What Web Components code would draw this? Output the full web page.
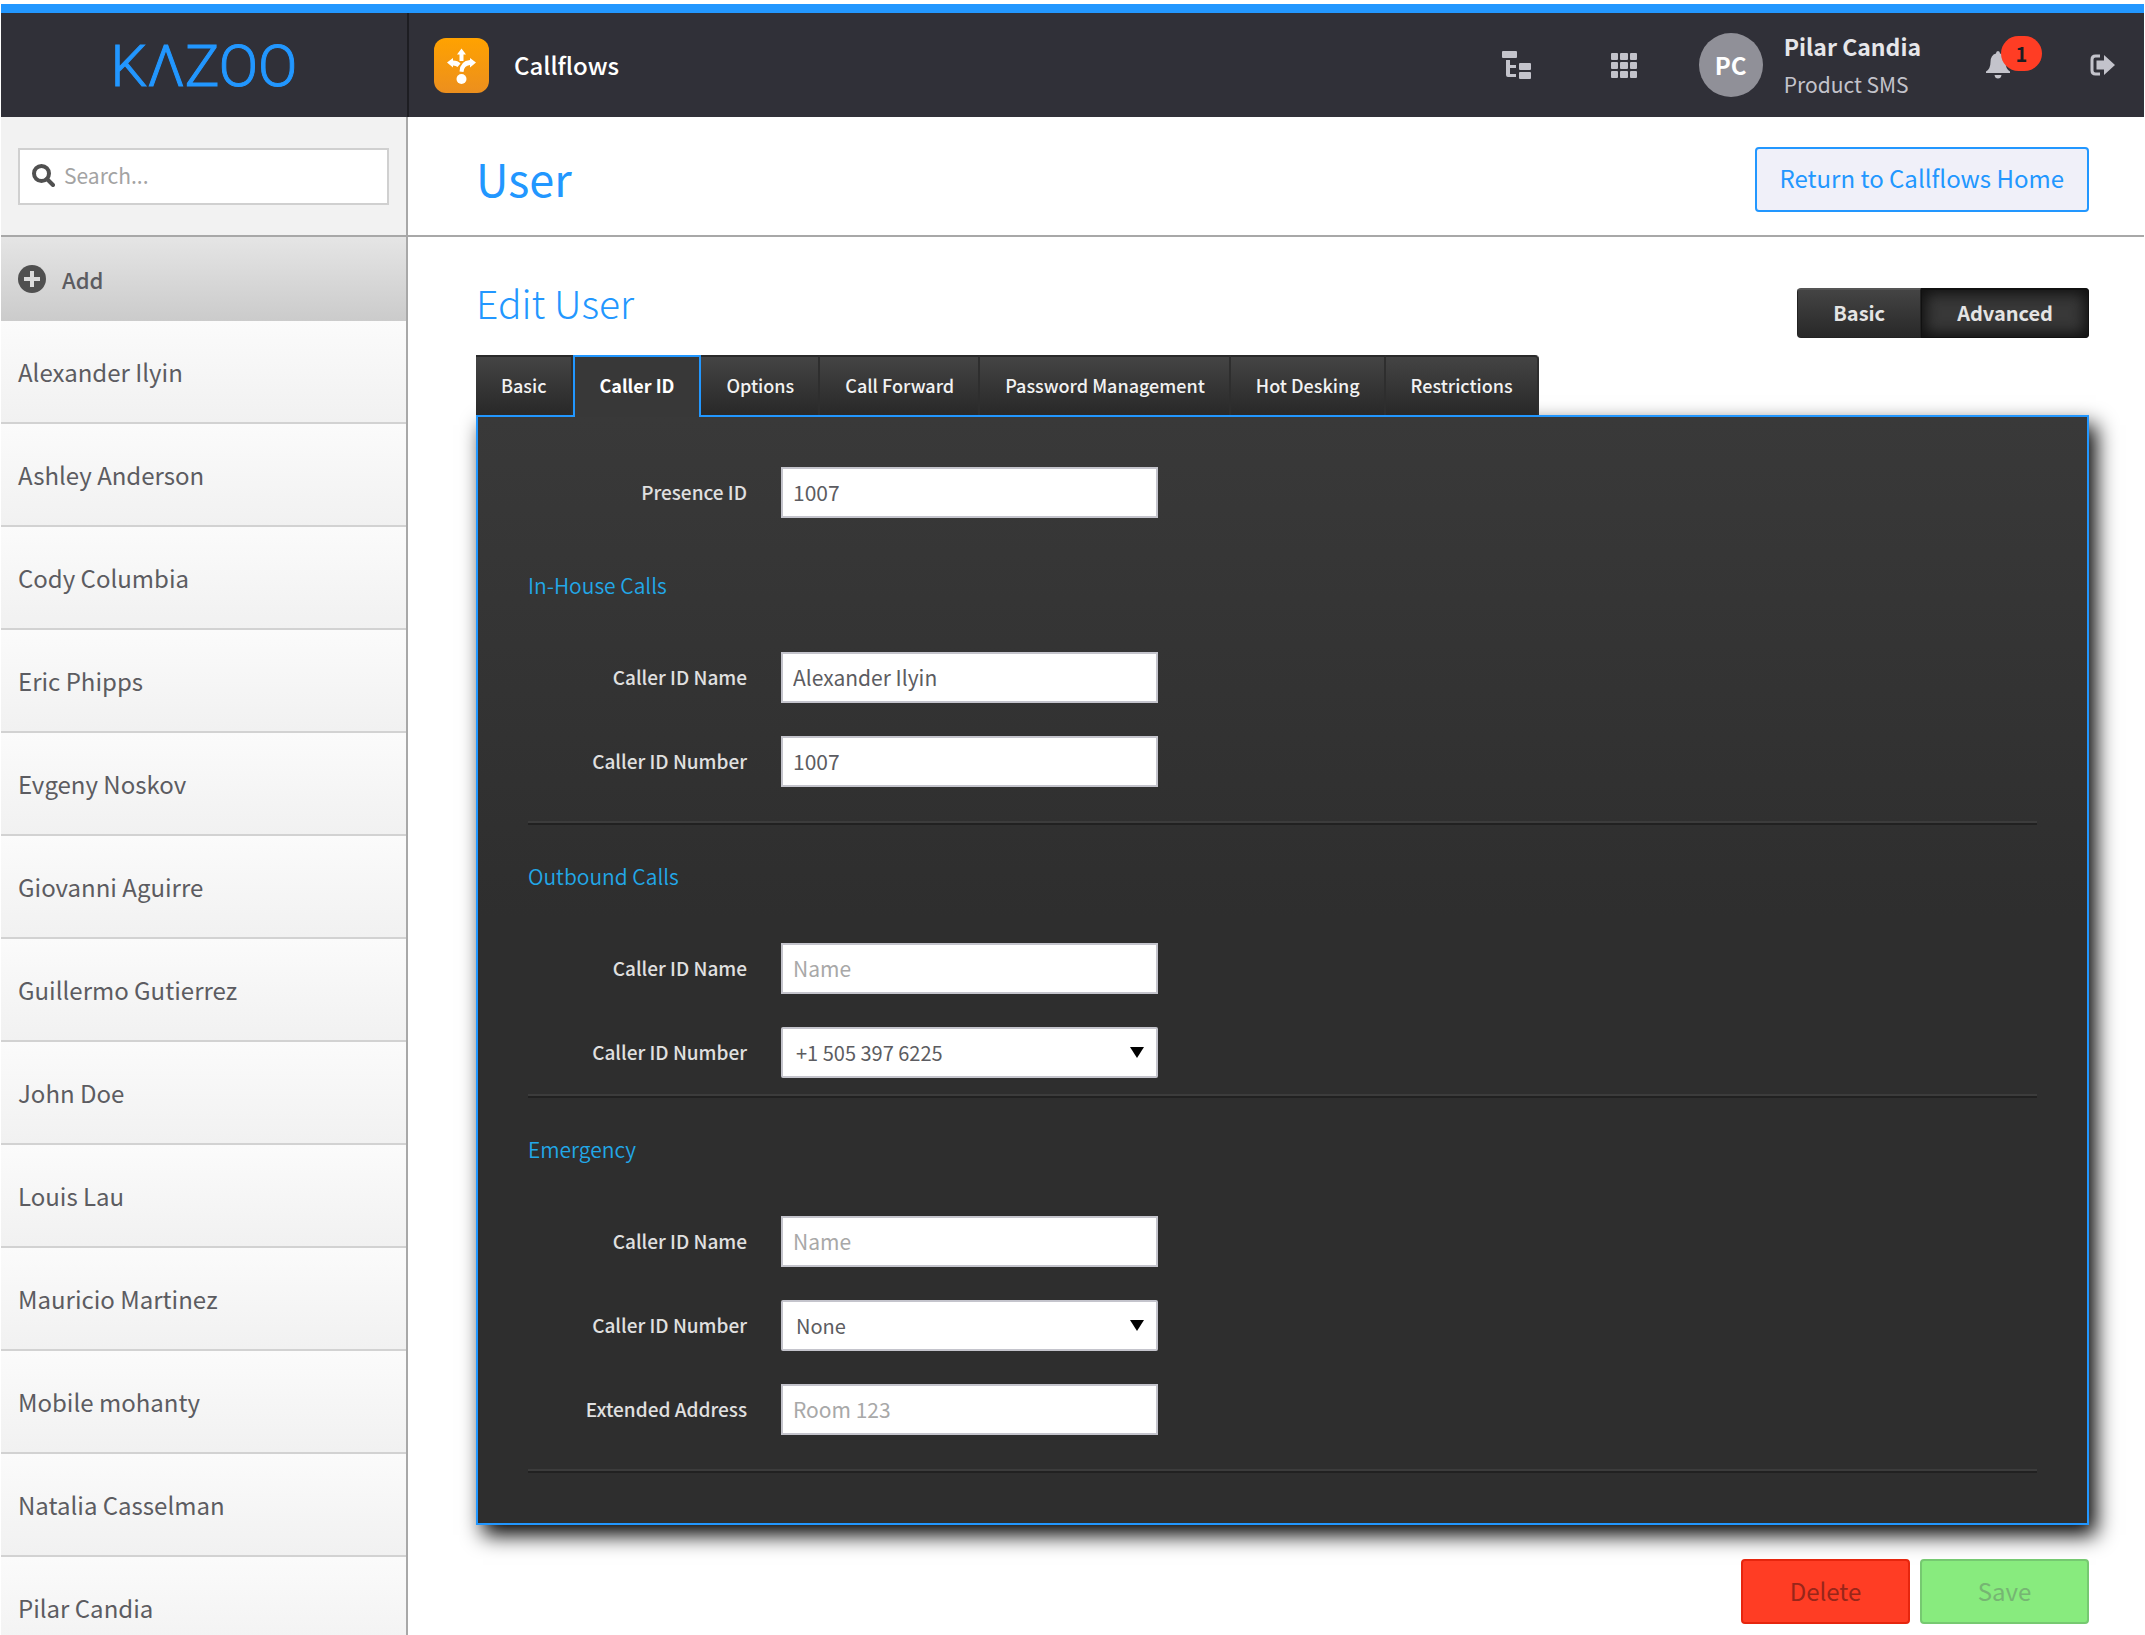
<!DOCTYPE html>
<html lang="en">
<head>
<meta charset="utf-8">
<title>Callflows - User</title>
<style>
  :root {
    --blue: #2297ff;
    --dark: #303038;
    --text: #5c5c61;
    --line: #a8a8a8;
  }
  body {
    margin: 0;
    font-family: "Noto Sans CJK SC", "Open Sans", sans-serif;
    font-size: 24px;
    line-height: 32px;
    color: var(--text);
    background: #fff;
  }
</style>
</head>
<body>
<kz-app>
  <kz-topbar slot="top" app="Callflows" user="Pilar Candia" account="Product SMS" initials="PC" alerts="1"></kz-topbar>

  <kz-sidebar slot="side">
    <kz-entry>Alexander Ilyin</kz-entry>
    <kz-entry>Ashley Anderson</kz-entry>
    <kz-entry>Cody Columbia</kz-entry>
    <kz-entry>Eric Phipps</kz-entry>
    <kz-entry>Evgeny Noskov</kz-entry>
    <kz-entry>Giovanni Aguirre</kz-entry>
    <kz-entry>Guillermo Gutierrez</kz-entry>
    <kz-entry>John Doe</kz-entry>
    <kz-entry>Louis Lau</kz-entry>
    <kz-entry>Mauricio Martinez</kz-entry>
    <kz-entry>Mobile mohanty</kz-entry>
    <kz-entry>Natalia Casselman</kz-entry>
    <kz-entry>Pilar Candia</kz-entry>
  </kz-sidebar>

  <kz-page-title heading="User">
    <kz-button kind="outline">Return to Callflows Home</kz-button>
  </kz-page-title>

  <kz-editor heading="Edit User">
    <kz-switch slot="mode" options="Basic,Advanced" active="Advanced"></kz-switch>
    <kz-tabs slot="tabs" tabs="Basic,Caller ID,Options,Call Forward,Password Management,Hot Desking,Restrictions" active="Caller ID"></kz-tabs>

    <kz-field label="Presence ID" value="1007"></kz-field>
    <kz-section heading="In-House Calls">
      <kz-field label="Caller ID Name" value="Alexander Ilyin"></kz-field>
      <kz-field label="Caller ID Number" value="1007"></kz-field>
    </kz-section>
    <kz-section heading="Outbound Calls" tight>
      <kz-field label="Caller ID Name" placeholder="Name"></kz-field>
      <kz-field label="Caller ID Number" options="+1 505 397 6225"></kz-field>
    </kz-section>
    <kz-section heading="Emergency">
      <kz-field label="Caller ID Name" placeholder="Name"></kz-field>
      <kz-field label="Caller ID Number" options="None"></kz-field>
      <kz-field label="Extended Address" placeholder="Room 123"></kz-field>
    </kz-section>

    <kz-button slot="actions" kind="danger">Delete</kz-button>
    <kz-button slot="actions" kind="success">Save</kz-button>
  </kz-editor>
</kz-app>

<script>
// small base class: every element renders a template string into its shadow root
class KzElement extends HTMLElement {
  constructor() {
    super();
    this.attachShadow({ mode: "open" });
  }

  connectedCallback() {
    this.shadowRoot.innerHTML = this.render();
  }

  attr(name) {
    return this.getAttribute(name) || "";
  }

  list(name) {
    return this.attr(name).split(",");
  }
}

class KzApp extends KzElement {
  render() {
    return `
    <style>
      :host {
        display: grid;
        grid-template-columns: 407px 1fr;
        grid-template-rows: auto 1fr;
        height: 100vh;
        box-sizing: border-box;
        padding: 4px 1px 0;
        overflow: hidden;
      }
      header { grid-column: 1 / -1; }
      aside { min-height: 0; overflow: hidden; border-right: 2px solid var(--line); }
      main { min-width: 0; }
    </style>
    <header><slot name="top"></slot></header>
    <aside><slot name="side"></slot></aside>
    <main><slot></slot></main>
    `;
  }
}

class KzTopbar extends KzElement {
  render() {
    return `
    <style>
      :host {
        display: flex;
        align-items: center;
        height: 104px;
        border-top: 9px solid var(--blue);
        background: var(--dark);
        color: #fff;
      }
      .logo {
        box-sizing: border-box;
        width: 408px;
        height: 104px;
        border-right: 2px solid #1d1d22;
        font: 300 58px/106px Roboto, sans-serif;
        text-align: center;
        color: var(--blue);
        -webkit-text-stroke: 1px var(--blue);
      }
      .app { display: flex; align-items: center; gap: 25px; margin-left: 25px; font-weight: 500; }
      .app svg { display: block; width: 55px; height: 55px; }
      nav { display: flex; align-items: center; gap: 62px; margin-left: auto; margin-right: 29px; }
      .group { display: flex; align-items: center; gap: 80px; }
      button { position: relative; padding: 0; border: 0; background: none; color: #c3c3cb; }
      button svg { display: block; fill: currentColor; }
      .user { display: flex; align-items: center; gap: 21px; margin-right: 3px; }
      .avatar {
        width: 64px;
        height: 64px;
        border-radius: 50%;
        background: #909098;
        font-size: 24px;
        font-weight: 700;
        line-height: 64px;
        text-align: center;
      }
      .name { font-size: 23px; font-weight: 700; line-height: 38px; color: #e6e6ea; }
      .account { font-size: 21px; line-height: 38px; color: #c3c3cb; }
      .badge {
        position: absolute;
        left: 15px;
        top: -15px;
        width: 41px;
        height: 35px;
        border-radius: 18px;
        background: #ff3d24;
        color: #1d1d22;
        font: bold 20px/35px "Noto Sans CJK SC", sans-serif;
      }
    </style>
    <div class="logo" aria-label="Kazoo">KΛZOO</div>
    <div class="app">
      <svg viewBox="0 0 55 55">
        <defs><linearGradient id="g" x2="0" y2="1"><stop stop-color="#ffa200"/><stop offset="1" stop-color="#ec8f1e"/></linearGradient></defs>
        <rect width="55" height="55" rx="12" fill="url(#g)"/>
        <g fill="#fff">
          <circle cx="27.500" cy="41" r="5"/>
          <path d="M27.500 10.500 32 16.500H29.500V23H25.500V16.500H23z"/>
          <path d="M13 24.500 19 20V22.500Q24 22.500 26.500 25.500L23.500 29Q22 27.500 19 27.500V29.500z"/>
          <path d="M42 24.500 36 20V22Q26 23 25.500 33.500L29.500 34Q30 27.500 36 27V29.500z"/>
        </g>
      </svg>
      <span>${this.attr("app")}</span>
    </div>
    <nav>
      <div class="group">
        <button aria-label="Account tree">
          <svg width="29" height="28" viewBox="0 0 29 28"><rect width="15" height="7" rx="1"/><path d="M4 9H8V14H14V17H8V23H14V26H6Q4 26 4 24z"/><rect x="17" y="12" width="12" height="7" rx="1"/><rect x="17" y="21" width="12" height="7" rx="1"/></svg>
        </button>
        <button aria-label="Apps">
          <svg width="26" height="25" viewBox="0 0 26 25"><path d="M1 0h5q1 0 1 1v5q0 1-1 1h-5q-1 0-1-1v-5q0-1 1-1zM10 0h6q1 0 1 1v5q0 1-1 1h-6q-1 0-1-1v-5q0-1 1-1zM20 0h5q1 0 1 1v5q0 1-1 1h-5q-1 0-1-1v-5q0-1 1-1zM1 9h5q1 0 1 1v5q0 1-1 1h-5q-1 0-1-1v-5q0-1 1-1zM10 9h6q1 0 1 1v5q0 1-1 1h-6q-1 0-1-1v-5q0-1 1-1zM20 9h5q1 0 1 1v5q0 1-1 1h-5q-1 0-1-1v-5q0-1 1-1zM1 18h5q1 0 1 1v5q0 1-1 1h-5q-1 0-1-1v-5q0-1 1-1zM10 18h6q1 0 1 1v5q0 1-1 1h-6q-1 0-1-1v-5q0-1 1-1zM20 18h5q1 0 1 1v5q0 1-1 1h-5q-1 0-1-1v-5q0-1 1-1z"/></svg>
        </button>
      </div>
      <div class="user">
        <div class="avatar">${this.attr("initials")}</div>
        <div>
          <div class="name">${this.attr("user")}</div>
          <div class="account">${this.attr("account")}</div>
        </div>
      </div>
      <div class="group">
        <button aria-label="Notifications">
          <svg width="24" height="28" viewBox="0 0 24 28"><path d="M12 0Q14 0 14 2.500Q19.500 4 19.500 11Q19.500 18 24 20.500V22H0V20.500Q4.500 18 4.500 11Q4.500 4 10 2.500Q10 0 12 0zM8.500 24H15.500Q15 27.500 12 27.500Q9 27.500 8.500 24z"/></svg>
          <span class="badge">${this.attr("alerts")}</span>
        </button>
        <button aria-label="Log out">
          <svg width="25" height="22" viewBox="0 0 25 22"><path d="M10 2H5.500Q2 2 2 5.500V16.500Q2 20 5.500 20H10" fill="none" stroke="currentColor" stroke-width="3"/><path d="M6.500 6.500H14V1L25 11 14 21V15.500H6.500z"/></svg>
        </button>
      </div>
    </nav>
    `;
  }
}

class KzSidebar extends KzElement {
  render() {
    return `
    <style>
      :host { display: block; }
      .search { padding: 31px 17px 30px; background: #f2f2f2; border-bottom: 2px solid var(--line); }
      .box {
        display: flex;
        align-items: center;
        gap: 9px;
        box-sizing: border-box;
        height: 57px;
        padding: 0 12px 3px;
        border: 2px solid #d0d0d0;
        background: #fff;
      }
      .box svg { flex: none; }
      input {
        flex: 1;
        min-width: 0;
        padding: 0;
        border: 0;
        outline: 0;
        background: none;
        font: inherit;
        font-size: 21px;
        color: inherit;
      }
      input::placeholder { color: #a3a3a3; }
      .add {
        display: flex;
        align-items: center;
        gap: 16px;
        width: 100%;
        height: 84px;
        padding: 0 17px;
        border: 0;
        background: linear-gradient(#e5e5e5, #cbcbcb);
        font: inherit;
        font-size: 22px;
        font-weight: 500;
        color: inherit;
      }
    </style>
    <div class="search">
      <label class="box">
        <svg width="23" height="23" viewBox="0 0 23 23" fill="none" stroke="#505050"><circle cx="9.500" cy="9.500" r="7.500" stroke-width="4"/><path d="M15 15 21 21" stroke-width="4" stroke-linecap="round"/></svg>
        <input type="text" placeholder="Search..." aria-label="Search">
      </label>
    </div>
    <button class="add">
      <svg width="28" height="28" viewBox="0 0 28 28"><circle cx="14" cy="14" r="14" fill="#505050"/><path d="M14 6V22M6 14H22" stroke="#dcdcdc" stroke-width="4"/></svg>
      Add
    </button>
    <slot></slot>
    `;
  }
}

class KzEntry extends KzElement {
  render() {
    return `
    <style>
      :host { display: block; }
      a {
        display: block;
        padding: 0 17px;
        border-bottom: 2px solid #d2d2d2;
        background: linear-gradient(#fbfbfb, #f1f1f1);
        font-size: 24px;
        line-height: 101px;
        color: inherit;
        text-decoration: none;
      }
    </style>
    <a href="#"><slot></slot></a>
    `;
  }
}

class KzPageTitle extends KzElement {
  render() {
    return `
    <style>
      :host {
        display: flex;
        align-items: center;
        justify-content: space-between;
        height: 112px;
        padding: 6px 55px 0 68px;
        border-bottom: 2px solid var(--line);
      }
      h1 { margin: 0; padding-bottom: 2px; font-size: 45px; font-weight: 400; line-height: 60px; color: var(--blue); }
    </style>
    <h1>${this.attr("heading")}</h1>
    <slot></slot>
    `;
  }
}

class KzButton extends KzElement {
  render() {
    return `
    <style>
      :host { display: block; }
      button {
        display: block;
        min-width: 169px;
        height: 65px;
        padding: 0 23px 2px;
        border: 2px solid;
        border-radius: 4px;
        font: inherit;
        font-size: 24px;
      }
      .outline { border-color: var(--blue); background: #f0f0f9; color: var(--blue); }
      .danger { border-color: #e6260e; background: #ff3d24; color: #98261a; }
      .success { border-color: #76c971; background: #88eb7e; color: #76b573; }
    </style>
    <button class="${this.attr("kind")}"><slot></slot></button>
    `;
  }
}

class KzSwitch extends KzElement {
  render() {
    const buttons = this.list("options").map((name) =>
      `<button class="${name === this.attr("active") ? "on" : ""}">${name}</button>`
    ).join("");
    return `
    <style>
      :host { display: flex; border-radius: 4px; overflow: hidden; }
      button {
        height: 50px;
        padding: 0 35px 2px;
        border: 1px solid #222;
        border-top: 2px solid #555;
        background: linear-gradient(#444, #282828);
        font: inherit;
        font-size: 20px;
        font-weight: 700;
        color: #e4e4e4;
      }
      .on { border-color: #111; background: #383838; box-shadow: inset 0 0 14px 4px #111; }
    </style>
    ${buttons}
    `;
  }
}

class KzTabs extends KzElement {
  render() {
    const buttons = this.list("tabs").map((name) => {
      const on = name === this.attr("active");
      return `<button role="tab" aria-selected="${on}">${name}</button>`;
    }).join("");
    return `
    <style>
      :host { display: flex; height: 60px; }
      button {
        height: 60px;
        padding: 0 24px 2px 25px;
        border: 0;
        border-top: 2px solid #2a2a2a;
        border-right: 2px solid #2e2e2e;
        background: linear-gradient(#444, #282828);
        font: inherit;
        font-size: 18px;
        font-weight: 500;
        color: #f2f2f2;
      }
      button:first-child { border-top-left-radius: 4px; }
      button:last-child { border-top-right-radius: 4px; }
      /* the open tab runs over the top border of the panel */
      button[aria-selected="true"] {
        position: relative;
        height: 62px;
        padding: 0 25px 4px;
        border: 2px solid var(--blue);
        border-bottom: 0;
        background: #383838;
        font-weight: 700;
        color: #fff;
      }
    </style>
    ${buttons}
    `;
  }
}

class KzEditor extends KzElement {
  render() {
    return `
    <style>
      :host { display: block; padding: 51px 55px 10px 68px; }
      .head { display: flex; justify-content: space-between; align-items: flex-start; margin-bottom: 17px; }
      h2 { margin: 0; font-size: 39px; font-weight: 300; line-height: 28px; color: var(--blue); }
      .tabs { position: relative; z-index: 1; }
      .panel {
        padding: 50px;
        border: 2px solid var(--blue);
        background: linear-gradient(#393939, #2e2e2e 500px);
        box-shadow: 7px 10px 20px #000;
      }
      .actions { display: flex; justify-content: flex-end; gap: 10px; margin-top: 34px; }
    </style>
    <div class="head"><h2>${this.attr("heading")}</h2><slot name="mode"></slot></div>
    <div class="tabs"><slot name="tabs"></slot></div>
    <div class="panel"><slot></slot></div>
    <div class="actions"><slot name="actions"></slot></div>
    `;
  }
}

class KzSection extends KzElement {
  render() {
    return `
    <style>
      :host {
        display: block;
        padding-bottom: 36px;
        border-bottom: 2px solid #212121;
        box-shadow: inset 0 -2px #3c3c3c;
      }
      :host([tight]) { padding-bottom: 18px; }
      h3 {
        margin: 0;
        padding: 34px 0;
        font-size: 21px;
        font-weight: 350;
        line-height: 66px;
        color: #22a8e8;
      }
      :host(:not(:first-of-type)) h3 { padding-top: 18px; }
      .rows { display: grid; gap: 33px; }
    </style>
    <h3>${this.attr("heading")}</h3>
    <div class="rows"><slot></slot></div>
    `;
  }
}

class KzField extends KzElement {
  control() {
    if (this.hasAttribute("options")) {
      const options = this.list("options").map((o) => `<option>${o}</option>`).join("");
      return `<select id="f">${options}</select>
        <svg width="14" height="11" viewBox="0 0 14 11"><path d="M0 0H14L7 11z"/></svg>`;
    }
    return `<input id="f" type="text" value="${this.attr("value")}" placeholder="${this.attr("placeholder")}">`;
  }

  render() {
    return `
    <style>
      :host { display: grid; grid-template-columns: 219px 377px; gap: 34px; align-items: center; }
      label { padding-bottom: 2px; font-size: 19px; font-weight: 500; text-align: right; color: #e0e0e0; }
      .control { position: relative; }
      input, select {
        display: block;
        box-sizing: border-box;
        width: 100%;
        height: 51px;
        margin: 0;
        padding: 0 10px 2px;
        border: 2px solid #c4c4cc;
        border-radius: 0;
        background: #fff;
        font: inherit;
        font-size: 21px;
        color: var(--text);
      }
      select { appearance: none; padding: 0 13px; border-radius: 2px; font-size: 20px; }
      input::placeholder { color: #a8a8a8; }
      svg { position: absolute; right: 14px; top: 20px; pointer-events: none; }
    </style>
    <label for="f">${this.attr("label")}</label>
    <div class="control">${this.control()}</div>
    `;
  }
}

customElements.define("kz-app", KzApp);
customElements.define("kz-topbar", KzTopbar);
customElements.define("kz-sidebar", KzSidebar);
customElements.define("kz-entry", KzEntry);
customElements.define("kz-page-title", KzPageTitle);
customElements.define("kz-button", KzButton);
customElements.define("kz-switch", KzSwitch);
customElements.define("kz-tabs", KzTabs);
customElements.define("kz-editor", KzEditor);
customElements.define("kz-section", KzSection);
customElements.define("kz-field", KzField);
</script>
</body>
</html>
